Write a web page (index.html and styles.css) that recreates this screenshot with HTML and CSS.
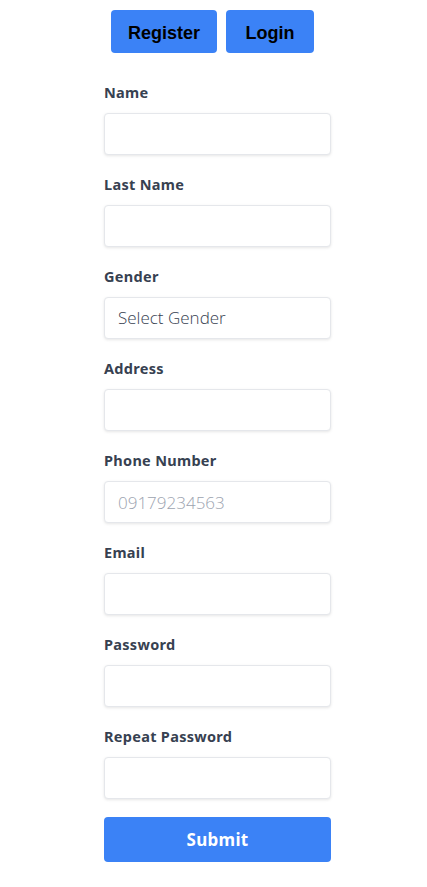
FILE: index.html
```html
<!DOCTYPE html>
<html>
<head>
<meta charset="utf-8">
<link rel="stylesheet" href="styles.css">
</head>
<body>
<div class="page">
  <div class="tabs">
    <button class="tab tab-register">Register</button>
    <button class="tab tab-login">Login</button>
  </div>
  <form class="form">
    <div class="field">
      <label class="label">Name</label>
      <input class="input" type="text">
    </div>
    <div class="field">
      <label class="label">Last Name</label>
      <input class="input" type="text">
    </div>
    <div class="field">
      <label class="label">Gender</label>
      <div class="input select">Select Gender</div>
    </div>
    <div class="field">
      <label class="label">Address</label>
      <input class="input" type="text">
    </div>
    <div class="field">
      <label class="label">Phone Number</label>
      <input class="input" type="text" placeholder="09179234563">
    </div>
    <div class="field">
      <label class="label">Email</label>
      <input class="input" type="text">
    </div>
    <div class="field">
      <label class="label">Password</label>
      <input class="input" type="password">
    </div>
    <div class="field">
      <label class="label">Repeat Password</label>
      <input class="input" type="password">
    </div>
    <button class="submit" type="button">Submit</button>
  </form>
</div>
</body>
</html>
```
FILE: styles.css
```css
* { box-sizing: border-box; }
html, body { margin: 0; padding: 0; background: #fff; }
body { font-family: "Open Sans", "Noto Sans", sans-serif; }
.page { padding-top: 10px; }
.tabs {
  display: flex;
  justify-content: center;
  gap: 9px;
  margin-left: -2px;
}
.tab {
  height: 43px;
  border: none;
  border-radius: 4px;
  background: #3b82f6;
  color: #000;
  font-family: "Liberation Sans", Arial, sans-serif;
  font-weight: bold;
  font-size: 18px;
  padding: 3px 0 0;
}
.tab-register { width: 106px; }
.tab-login { width: 88px; }
.form {
  width: 227px;
  margin: 30px 0 0 104px;
}
.field { margin-bottom: 20px; }
.label {
  display: block;
  height: 19px;
  line-height: 19px;
  margin-bottom: 11px;
  font-family: "Noto Sans", sans-serif;
  font-weight: 700;
  font-size: 14.5px;
  letter-spacing: 0.3px;
  color: #374151;
}
.input {
  display: block;
  width: 227px;
  height: 42px;
  border: 1px solid #e5e7eb;
  border-radius: 4px;
  box-shadow: 0 1px 3px rgba(0,0,0,0.1);
  padding: 0 13px;
  font-family: "Open Sans", sans-serif;
  font-weight: 300;
  font-size: 17px;
  color: #374151;
  background: #fff;
  outline: none;
}
.input::placeholder { color: #9ca3af; }
.select { line-height: 40px; }
.submit {
  display: block;
  width: 227px;
  height: 45px;
  margin-top: -2px;
  border: none;
  border-radius: 4px;
  background: #3b82f6;
  color: #fff;
  font-family: "Noto Sans", sans-serif;
  font-weight: 700;
  font-size: 17px;
  letter-spacing: 0.3px;
}
```
